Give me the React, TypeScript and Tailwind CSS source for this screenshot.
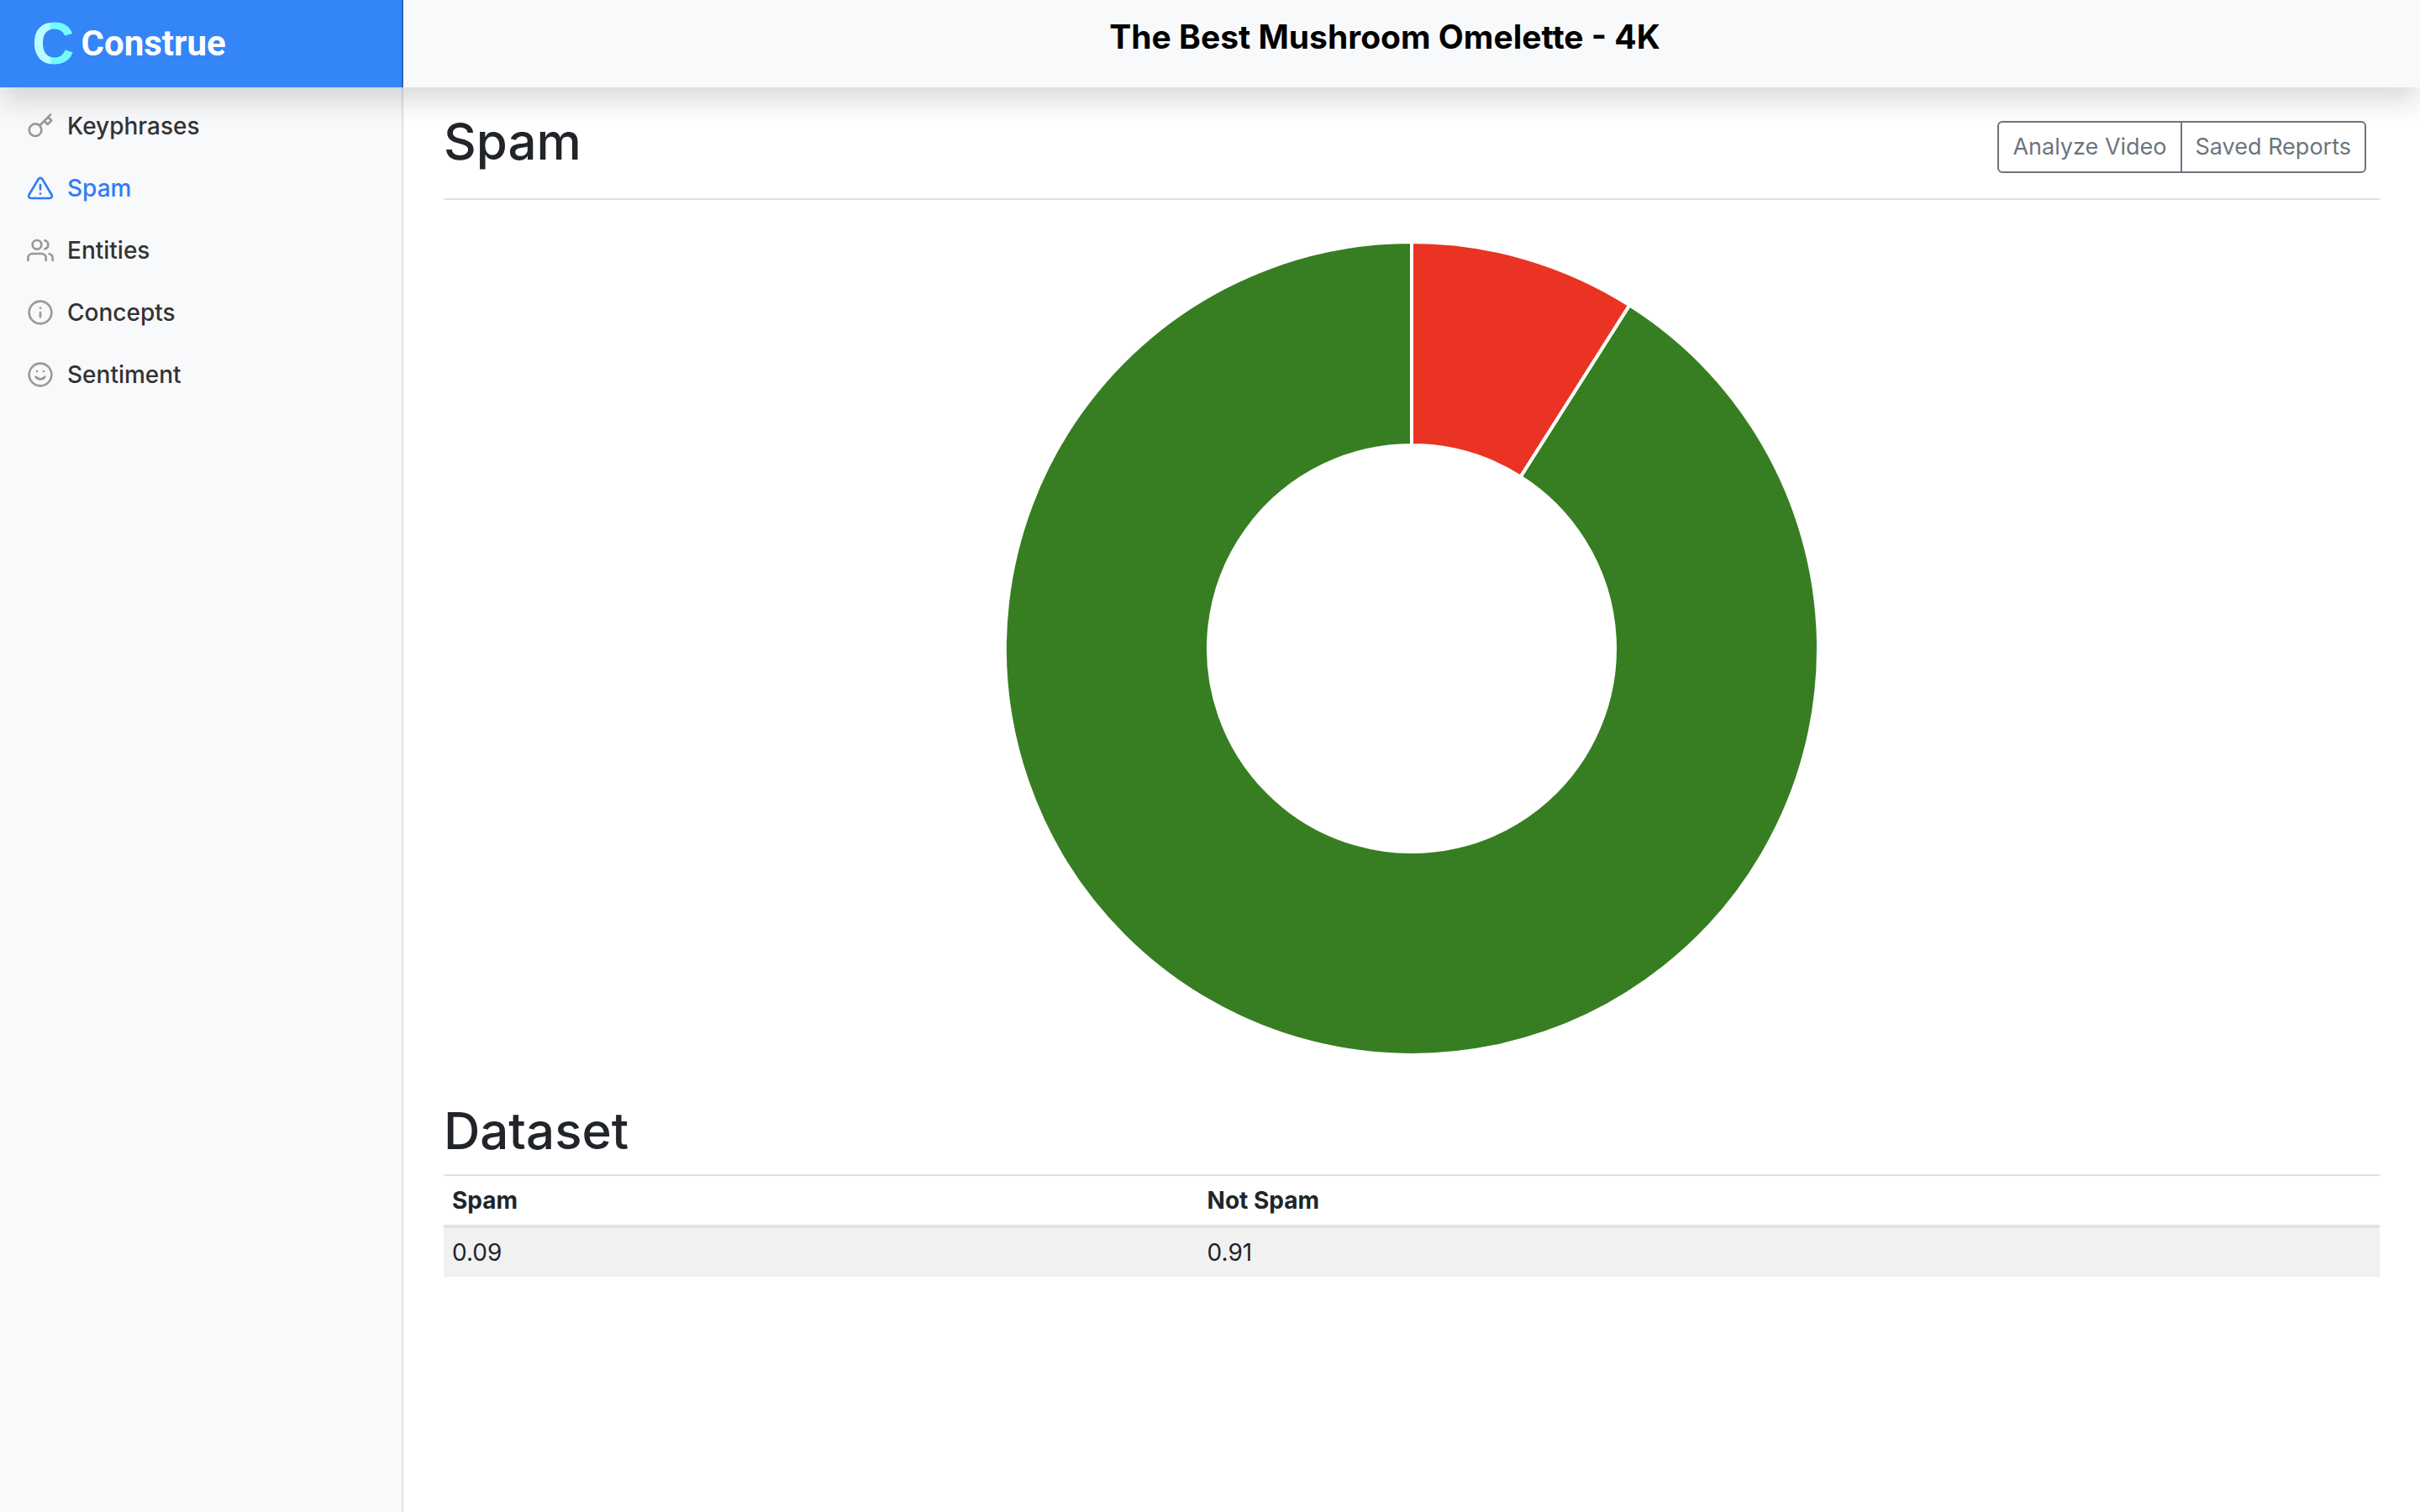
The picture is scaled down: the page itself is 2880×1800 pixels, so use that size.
import type { ReactNode } from 'react';

const navItems: { label: string; active?: boolean; icon: ReactNode }[] = [
  {
    label: 'Keyphrases',
    icon: (
      <path d="M21 2l-2 2m-7.61 7.61a5.5 5.5 0 1 1-7.778 7.778 5.5 5.5 0 0 1 7.777-7.777zm0 0L15.5 7.5m0 0l3 3L22 7l-3-3m-3.5 3.5L19 4" />
    ),
  },
  {
    label: 'Spam',
    active: true,
    icon: (
      <>
        <path d="M10.29 3.86L1.82 18a2 2 0 0 0 1.71 3h16.94a2 2 0 0 0 1.71-3L13.71 3.86a2 2 0 0 0-3.42 0z" />
        <path d="M12 9v4M12 17h.01" />
      </>
    ),
  },
  {
    label: 'Entities',
    icon: (
      <>
        <path d="M17 21v-2a4 4 0 0 0-4-4H5a4 4 0 0 0-4 4v2" />
        <circle cx="9" cy="7" r="4" />
        <path d="M23 21v-2a4 4 0 0 0-3-3.87M16 3.13a4 4 0 0 1 0 7.75" />
      </>
    ),
  },
  {
    label: 'Concepts',
    icon: (
      <>
        <circle cx="12" cy="12" r="10" />
        <path d="M12 16v-4M12 8h.01" />
      </>
    ),
  },
  {
    label: 'Sentiment',
    icon: (
      <>
        <circle cx="12" cy="12" r="10" />
        <path d="M8 14s1.5 2 4 2 4-2 4-2M9 9h.01M15 9h.01" />
      </>
    ),
  },
];

const slices = [
  { name: 'Spam', value: 0.09, color: '#ea3323' },
  { name: 'Not Spam', value: 0.91, color: '#377e22' },
];

const OUTER = 484;
const INNER = 242;

function point(radius: number, turn: number) {
  const angle = turn * 2 * Math.PI - Math.PI / 2;
  return `${radius * Math.cos(angle)} ${radius * Math.sin(angle)}`;
}

function arc(start: number, end: number) {
  const large = end - start > 0.5 ? 1 : 0;
  return `M${point(OUTER, start)}A${OUTER} ${OUTER} 0 ${large} 1 ${point(OUTER, end)}L${point(INNER, end)}A${INNER} ${INNER} 0 ${large} 0 ${point(INNER, start)}Z`;
}

function Doughnut() {
  let turn = 0;
  return (
    <svg viewBox="-486 -486 972 972" className="mx-auto w-full max-w-[972px]" role="img" aria-label="Spam share">
      {slices.map((s) => {
        const start = turn;
        turn += s.value;
        return <path key={s.name} d={arc(start, turn)} fill={s.color} stroke="#fff" strokeWidth="4" />;
      })}
    </svg>
  );
}

export default function App() {
  return (
    <div className="flex min-h-screen flex-col bg-white font-['Inter',sans-serif] text-[28px] leading-[42px] text-[#212529]">
      <header className="relative z-10 flex h-[104px] bg-[#f8f9fb] shadow-[0_16px_32px_rgba(0,0,0,0.15)]">
        <a
          href="#"
          className="flex w-[480px] shrink-0 items-center gap-2 border-r-2 border-[#2a67bb] bg-[#3485f8] pl-[38px] font-bold"
        >
          <span className="bg-linear-to-r from-[#b9fdfd] from-40% to-[#72fbfd] to-45% bg-clip-text font-['Liberation_Sans',sans-serif] text-[70px] leading-[104px] text-transparent">
            C
          </span>
          <span className="font-['Roboto',sans-serif] text-[42px] leading-[104px] text-white">Construe</span>
        </a>
        <h1 className="flex-1 pt-5 pr-16 text-center text-[39px] leading-[48px] font-bold text-black">
          The Best Mushroom Omelette - 4K
        </h1>
      </header>

      <div className="flex flex-1">
        <nav className="w-[480px] shrink-0 border-r-2 border-[#dfe0e2] bg-[#f8f9fb] pt-[9px]">
          <ul>
            {navItems.map((item) => (
              <li key={item.label}>
                <a
                  href="#"
                  className={
                    item.active
                      ? 'flex items-center gap-4 px-8 py-4 font-medium text-[#2f7cf6]'
                      : 'flex items-center gap-4 px-8 py-4 font-medium text-[#333333]'
                  }
                >
                  <svg
                    viewBox="0 0 24 24"
                    fill="none"
                    stroke="currentColor"
                    strokeWidth="2"
                    strokeLinecap="round"
                    strokeLinejoin="round"
                    className={item.active ? 'size-8' : 'size-8 text-[#999999]'}
                  >
                    {item.icon}
                  </svg>
                  {item.label}
                </a>
              </li>
            ))}
          </ul>
        </nav>

        <main className="min-w-0 flex-1 px-12 pt-[26px]">
          <div className="flex items-end justify-between border-b-2 border-[#dee2e6] pb-[30px]">
            <h2 className="text-[60px] leading-[76px] font-medium">Spam</h2>
            <div className="mr-4 flex text-[27px] text-[#6c757d]">
              <button type="button" className="h-[62px] rounded-l-md border-2 border-[#6c757d] px-4">
                Analyze Video
              </button>
              <button type="button" className="-ml-[2px] h-[62px] rounded-r-md border-2 border-[#6c757d] px-4">
                Saved Reports
              </button>
            </div>
          </div>

          <div className="pt-12">
            <Doughnut />
          </div>

          <h2 className="mt-[50px] text-[60px] leading-[76px] font-medium">Dataset</h2>
          <table className="mt-[14px] w-full border-collapse text-left">
            <thead>
              <tr className="h-[61px] border-t-2 border-b-4 border-[#dee2e6]">
                <th className="w-[39%] px-[10px] font-bold">Spam</th>
                <th className="px-[10px] font-bold">Not Spam</th>
              </tr>
            </thead>
            <tbody>
              <tr className="h-[60px] bg-[#f1f1f1]">
                <td className="px-[10px]">0.09</td>
                <td className="px-[10px]">0.91</td>
              </tr>
            </tbody>
          </table>
        </main>
      </div>
    </div>
  );
}
